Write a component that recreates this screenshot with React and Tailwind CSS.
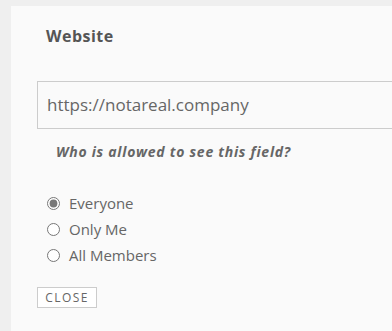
export default function App() {
  const options = ["Everyone", "Only Me", "All Members"];
  return (
    <div className="w-[392px] h-[331px] overflow-hidden bg-[#efefef] pl-[11px] pt-[6px]" style={{ fontFamily: "'Open Sans', 'Liberation Sans', sans-serif" }}>
      <div className="h-full bg-[#fafafa] pl-[26px]">
        <div className="pt-[18px] pl-[9px] text-[16px] leading-[24px] font-bold text-[#555] tracking-[0.03em]">Website</div>
        <div className="mt-[33px] h-[48px] w-[400px] border border-[#ccc] flex items-center pl-[9px] text-[17px] text-[#666]">
          https://notareal.company
        </div>
        <div className="mt-[13px] pl-[19px] text-[14px] leading-[20px] font-bold italic text-[#666] tracking-[0.052em]">Who is allowed to see this field?</div>
        <div className="mt-[31px] pl-[10px] flex flex-col gap-[6px]">
          {options.map((o, i) => (
            <label key={o} className="flex items-center gap-[9px] text-[15px] text-[#666] leading-[20px]">
              <input type="radio" name="vis" defaultChecked={i === 0} className="w-[13px] h-[13px] m-0 accent-[#777]" />
              {o}
            </label>
          ))}
        </div>
        <button className="mt-[22px] h-[21px] w-[60px] border border-[#ccc] bg-white text-[12px] tracking-[0.12em] text-[#666] leading-none">
          CLOSE
        </button>
      </div>
    </div>
  );
}
